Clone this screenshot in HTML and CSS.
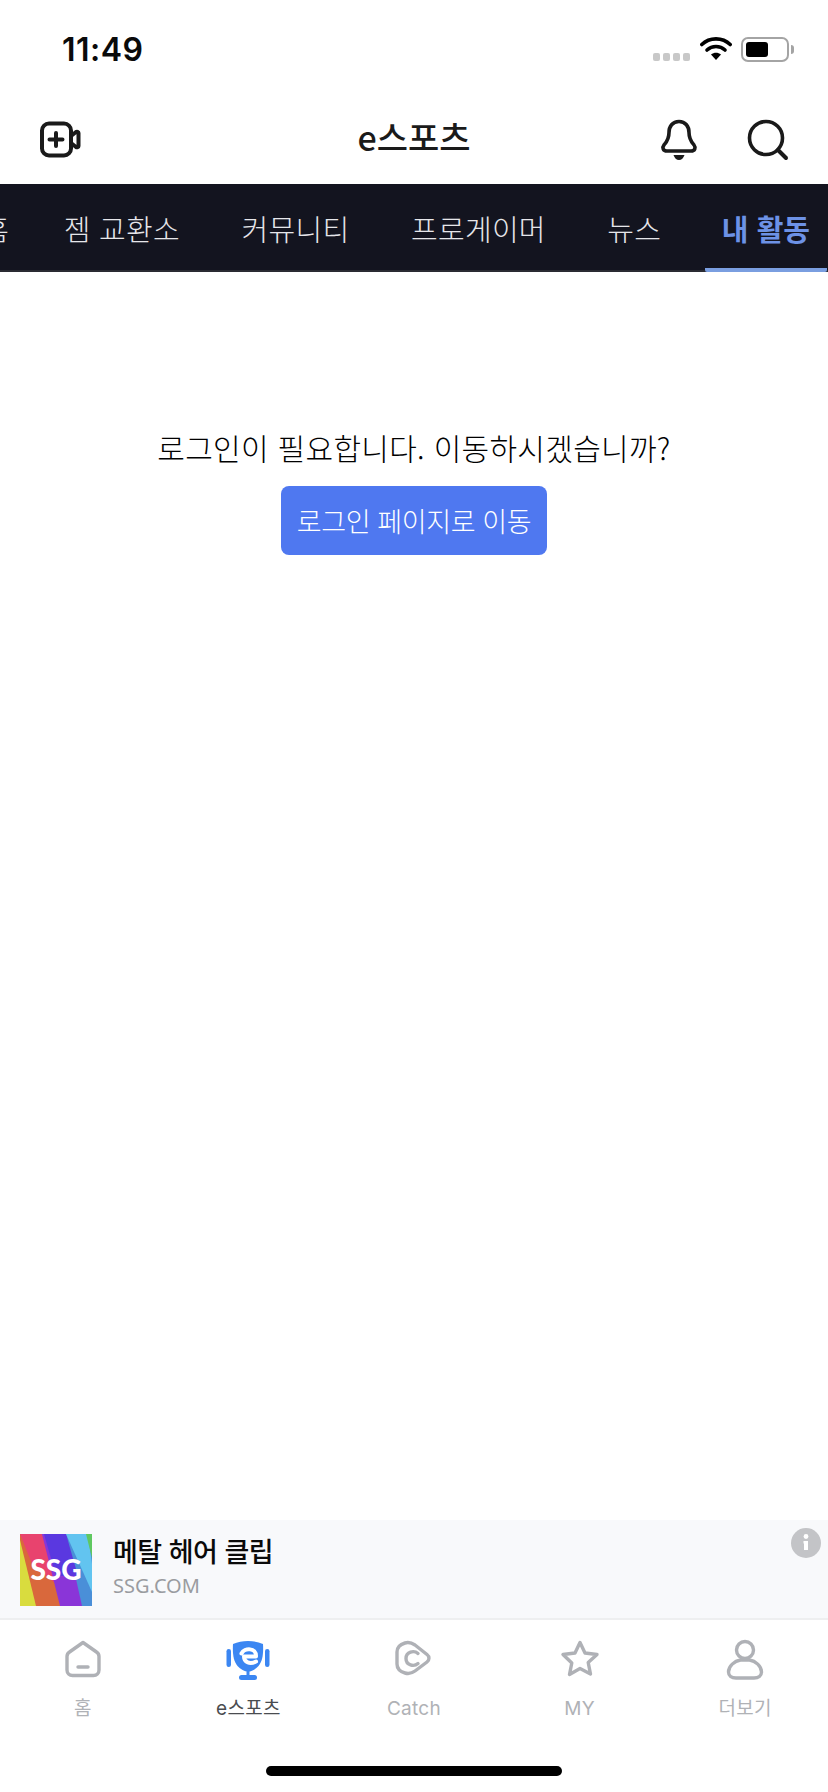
FILE: index.html
```html
<!DOCTYPE html>
<html lang="ko">
<head>
<meta charset="utf-8">
<title>e스포츠</title>
<link rel="stylesheet" href="styles.css">
</head>
<body>
<div class="app">
  <div class="status">
    <span class="time">11:49</span>
    <div class="status-icons">
      <div class="dots"><i></i><i></i><i></i><i></i></div>
      <svg class="wifi" width="32" height="24" viewBox="0 0 32 24"><path d="M1.800 7.500C9.500 0 22.500 0 30.200 7.500" fill="none" stroke="#000" stroke-width="3.600" stroke-linecap="round"/><path d="M7 13c5-4.600 13-4.600 18 0" fill="none" stroke="#000" stroke-width="3.600" stroke-linecap="round"/><path d="M11 17.500c3-2.400 7-2.400 10 0L16 23z" fill="#000"/></svg>
      <div class="battery"><div class="level"></div></div>
      <div class="cap"></div>
    </div>
  </div>
  <header class="top">
    <svg class="ico-video" width="42" height="38" viewBox="0 0 42 38"><rect x="3" y="2.500" width="29" height="32" rx="7" fill="none" stroke="#1a1a1a" stroke-width="4"/><path d="M32 15l5-4c1-.7 2.500-.2 2.500 1v13c0 1.200-1.500 1.700-2.500 1l-5-4" fill="none" stroke="#1a1a1a" stroke-width="4" stroke-linejoin="round"/><path d="M17 12v13M10.500 18.500h13" stroke="#1a1a1a" stroke-width="4" stroke-linecap="round"/></svg>
    <h1 class="title">e스포츠</h1>
    <div class="top-right">
      <svg width="38" height="42" viewBox="0 0 38 42"><path d="M19 2.500c-6.500 0-10 5-10 11 0 7-2.500 9.500-5 12.500-2 2.500-1 6 3 6h24c4 0 5-3.500 3-6-2.500-3-5-5.500-5-12.500 0-6-3.500-11-10-11z" fill="none" stroke="#1a1a1a" stroke-width="3.600" stroke-linejoin="round"/><path d="M13.500 36h11c-1 3-3 5-5.500 5s-4.500-2-5.500-5z" fill="#1a1a1a"/></svg>
      <svg width="42" height="42" viewBox="0 0 42 42"><circle cx="19" cy="19" r="16.500" fill="none" stroke="#1a1a1a" stroke-width="3.600"/><path d="M31 31l8 8" stroke="#1a1a1a" stroke-width="4" stroke-linecap="round"/></svg>
    </div>
  </header>
  <nav class="tabs">
    <span class="tab cut">홈</span>
    <span class="tab">젬 교환소</span>
    <span class="tab">커뮤니티</span>
    <span class="tab">프로게이머</span>
    <span class="tab">뉴스</span>
    <span class="tab active">내 활동</span>
  </nav>
  <main class="content">
    <p class="msg">로그인이 필요합니다. 이동하시겠습니까?</p>
    <button class="login">로그인 페이지로 이동</button>
  </main>
  <aside class="ad">
    <svg class="ad-logo" width="72" height="72" viewBox="0 0 72 72">
      <rect width="72" height="72" fill="#4a8fd8"/>
      <path d="M0 0H22L42 72H0z" fill="#d9683c"/>
      <path d="M0 0H22L36 50 12 30z" fill="#e8436e"/>
      <path d="M0 6L16 72H0z" fill="#d9dc3e"/>
      <path d="M22 0H46L62 72H40z" fill="#8a35d8"/>
      <path d="M24 0H46L58 42H36z" fill="#5a38e0"/>
      <path d="M46 0H68L72 30V58z" fill="#62c4f0"/>
      <path d="M66 0H72V24z" fill="#5fc860"/>
      <text class="ssg" x="36" y="46" text-anchor="middle">SSG</text>
    </svg>
    <div class="ad-text">
      <div class="ad-title">메탈 헤어 클립</div>
      <div class="ad-sub">SSG.COM</div>
    </div>
    <svg class="ad-info" width="30" height="30" viewBox="0 0 30 30"><circle cx="15" cy="15" r="15" fill="#c3c4c7"/><circle cx="15" cy="8.500" r="2.400" fill="#fff"/><path d="M12.500 13H17v9h-4v-6.500h-.5z" fill="#fff"/></svg>
  </aside>
  <footer class="bottom">
    <div class="item">
      <svg width="38" height="42" viewBox="0 0 38 42"><path d="M19 3.500l13.500 9.500c1.500 1 2.500 2.500 2.500 4.500v13.500c0 3.500-2.500 5.500-5.500 5.500h-21C5.500 36.500 3 34.500 3 31V17.500c0-2 1-3.500 2.500-4.500z" fill="none" stroke="#afb1b6" stroke-width="3.400" stroke-linejoin="round"/><path d="M14 28h10" stroke="#afb1b6" stroke-width="3.400" stroke-linecap="round"/></svg>
      <span>홈</span>
    </div>
    <div class="item on">
      <svg width="44" height="42" viewBox="0 0 44 42"><path d="M7 5c9-4 21-4 30 0 .6 10-.5 17-4.500 22-3 3.500-7 5.500-10.500 5.500S14.500 30.500 11.500 27C7.500 22 6.400 15 7 5z" fill="#3b86f2"/><rect x="0.500" y="10" width="4.500" height="18" rx="2.200" fill="#3b86f2"/><rect x="39" y="10" width="4.500" height="18" rx="2.200" fill="#3b86f2"/><path d="M20.500 31h3v6h-3z" fill="#3b86f2"/><rect x="13" y="36" width="18" height="5" rx="2.500" fill="#3b86f2"/><path d="M15.500 14.500c3-6 15-6 14.500 3H18c0 6 6 8 12 5" fill="none" stroke="#fff" stroke-width="4" stroke-linecap="round" stroke-linejoin="round"/></svg>
      <span>e스포츠</span>
    </div>
    <div class="item">
      <svg width="40" height="42" viewBox="0 0 40 42"><path d="M11 4c4-1.200 7 0 10 2l12 9.500c2.600 2 2.600 5.500 0 7.500L21 32c-3 2.200-6 3.200-10 2-5-1.500-8-4-8-9V13c0-5 3-7.500 8-9z" fill="none" stroke="#afb1b6" stroke-width="3.400" stroke-linejoin="round"/><path d="M24 14.500c-4-3.500-12-2-12 5s8 8.500 12 5" fill="none" stroke="#afb1b6" stroke-width="3.400" stroke-linecap="round"/></svg>
      <span>Catch</span>
    </div>
    <div class="item">
      <svg width="40" height="42" viewBox="0 0 40 42"><path d="M20 3.500l5 10.500 12 1.500-8.800 8 2.300 11.500L20 29.500 9.500 35.500l2.300-11.500L3 15.500 15 14z" fill="none" stroke="#afb1b6" stroke-width="3.400" stroke-linejoin="round"/></svg>
      <span>MY</span>
    </div>
    <div class="item">
      <svg width="38" height="42" viewBox="0 0 38 42"><circle cx="19" cy="11" r="8.500" fill="none" stroke="#afb1b6" stroke-width="3.400"/><path d="M10 39h18c4.500 0 7.500-2.500 7.500-6 0-6-6-11-12-12h-9c-6 1-12 6-12 12 0 3.500 3 6 7.500 6z" fill="none" stroke="#afb1b6" stroke-width="3.400" stroke-linejoin="round"/></svg>
      <span>더보기</span>
    </div>
  </footer>
  <div class="home-bar"><div class="pill"></div></div>
</div>
</body>
</html>
```
FILE: styles.css
```css
* { box-sizing: border-box; }
html, body { margin: 0; padding: 0; background: #fff; }
body { font-family: "Noto Sans CJK KR", "Noto Sans", sans-serif; }
.app { width: 828px; height: 1792px; display: flex; flex-direction: column; overflow: hidden; }

.status { height: 88px; flex: none; display: flex; justify-content: space-between; align-items: flex-start; padding: 30px 34px 0 62px; }
.time { font: 600 32px/40px Inter, "Liberation Sans", sans-serif; color: #0a0a0a; letter-spacing: .5px; }
.status-icons { display: flex; align-items: flex-start; padding-top: 7px; }
.dots { display: flex; gap: 3px; margin-top: 16px; margin-right: 10px; }
.dots i { width: 7px; height: 8px; border-radius: 2px; background: #c8c8c8; display: block; }
.wifi { margin-right: 9px; }
.battery { width: 48px; height: 25px; border: 2px solid #a4a4a4; border-radius: 7px; padding: 3px; }
.level { width: 22px; height: 15px; background: #000; border-radius: 3px; }
.cap { width: 3px; height: 9px; margin: 8px 0 0 2px; background: #a4a4a4; border-radius: 0 3px 3px 0; }

.top { height: 96px; flex: none; display: flex; align-items: center; justify-content: space-between; padding: 8px 39px 0 39px; position: relative; }
.ico-video { display: block; }
.title { margin: 0; font-size: 34px; font-weight: 500; line-height: 44px; color: #1a1a1a; position: absolute; left: 0; right: 0; text-align: center; top: 27px; letter-spacing: 0; }
.top-right { display: flex; gap: 49px; align-items: center; }

.tabs { height: 88px; flex: none; background: #13141f; box-shadow: inset 0 -2px 0 #2a2b33; display: flex; justify-content: flex-end; align-items: center; white-space: nowrap; overflow: hidden; }
.tab { font-size: 29px; line-height: 40px; color: #e6e6ea; font-weight: 300; padding: 0 18px; margin-left: 25.5px; height: 88px; display: flex; align-items: center; letter-spacing: .3px; }
.tab.active { color: #6d92e6; font-weight: 700; border-bottom: 4px solid #7a9ee0; padding: 4px 17px 0; margin-right: 1px; border-radius: 2px; letter-spacing: 0; }
.tab.cut { padding-right: 11px; }

.content { flex: 1; min-height: 0; display: flex; flex-direction: column; align-items: center; padding-top: 153px; }
.msg { margin: 0; font-size: 30px; line-height: 44px; color: #000; font-weight: 300; letter-spacing: .3px; }
.login { margin-top: 17px; width: 266px; height: 69px; background: #4f78f0; color: #fff; border: 0; border-radius: 8px; font: 300 27px/38px "Noto Sans CJK KR", sans-serif; letter-spacing: -.4px; padding: 0; }

.ad { height: 100px; flex: none; background: #f8f9fb; border-bottom: 2px solid #eeeff0; display: flex; align-items: center; padding: 2px 0 0 20px; position: relative; }
.ad-logo { display: block; flex: none; }
.ssg { font: 900 28px Lato, sans-serif; fill: #fff; }
.ad-text { margin: 0 0 10px 21px; display: flex; flex-direction: column; }
.ad-title { font-size: 27px; line-height: 40px; font-weight: 500; color: #0a0a0a; letter-spacing: -.5px; }
.ad-sub { font: 400 20px/28px "Noto Sans", sans-serif; color: #9a9ca0; margin-top: 1px; }
.ad-info { position: absolute; right: 7px; top: 8px; }

.bottom { height: 108px; flex: none; display: flex; padding-top: 19px; }
.item { flex: 1; display: flex; flex-direction: column; align-items: center; height: 89px; }
.item svg { display: block; }
.item span { margin-top: 14px; font: 400 19px/28px Inter, "Noto Sans CJK KR", sans-serif; color: #b0b2b6; letter-spacing: .3px; }
.item.on span { color: #4a4c50; }

.home-bar { flex: none; height: 64px; display: flex; justify-content: center; align-items: flex-start; padding-top: 38px; }
.pill { width: 296px; height: 10px; border-radius: 5px; background: #000; }
```
